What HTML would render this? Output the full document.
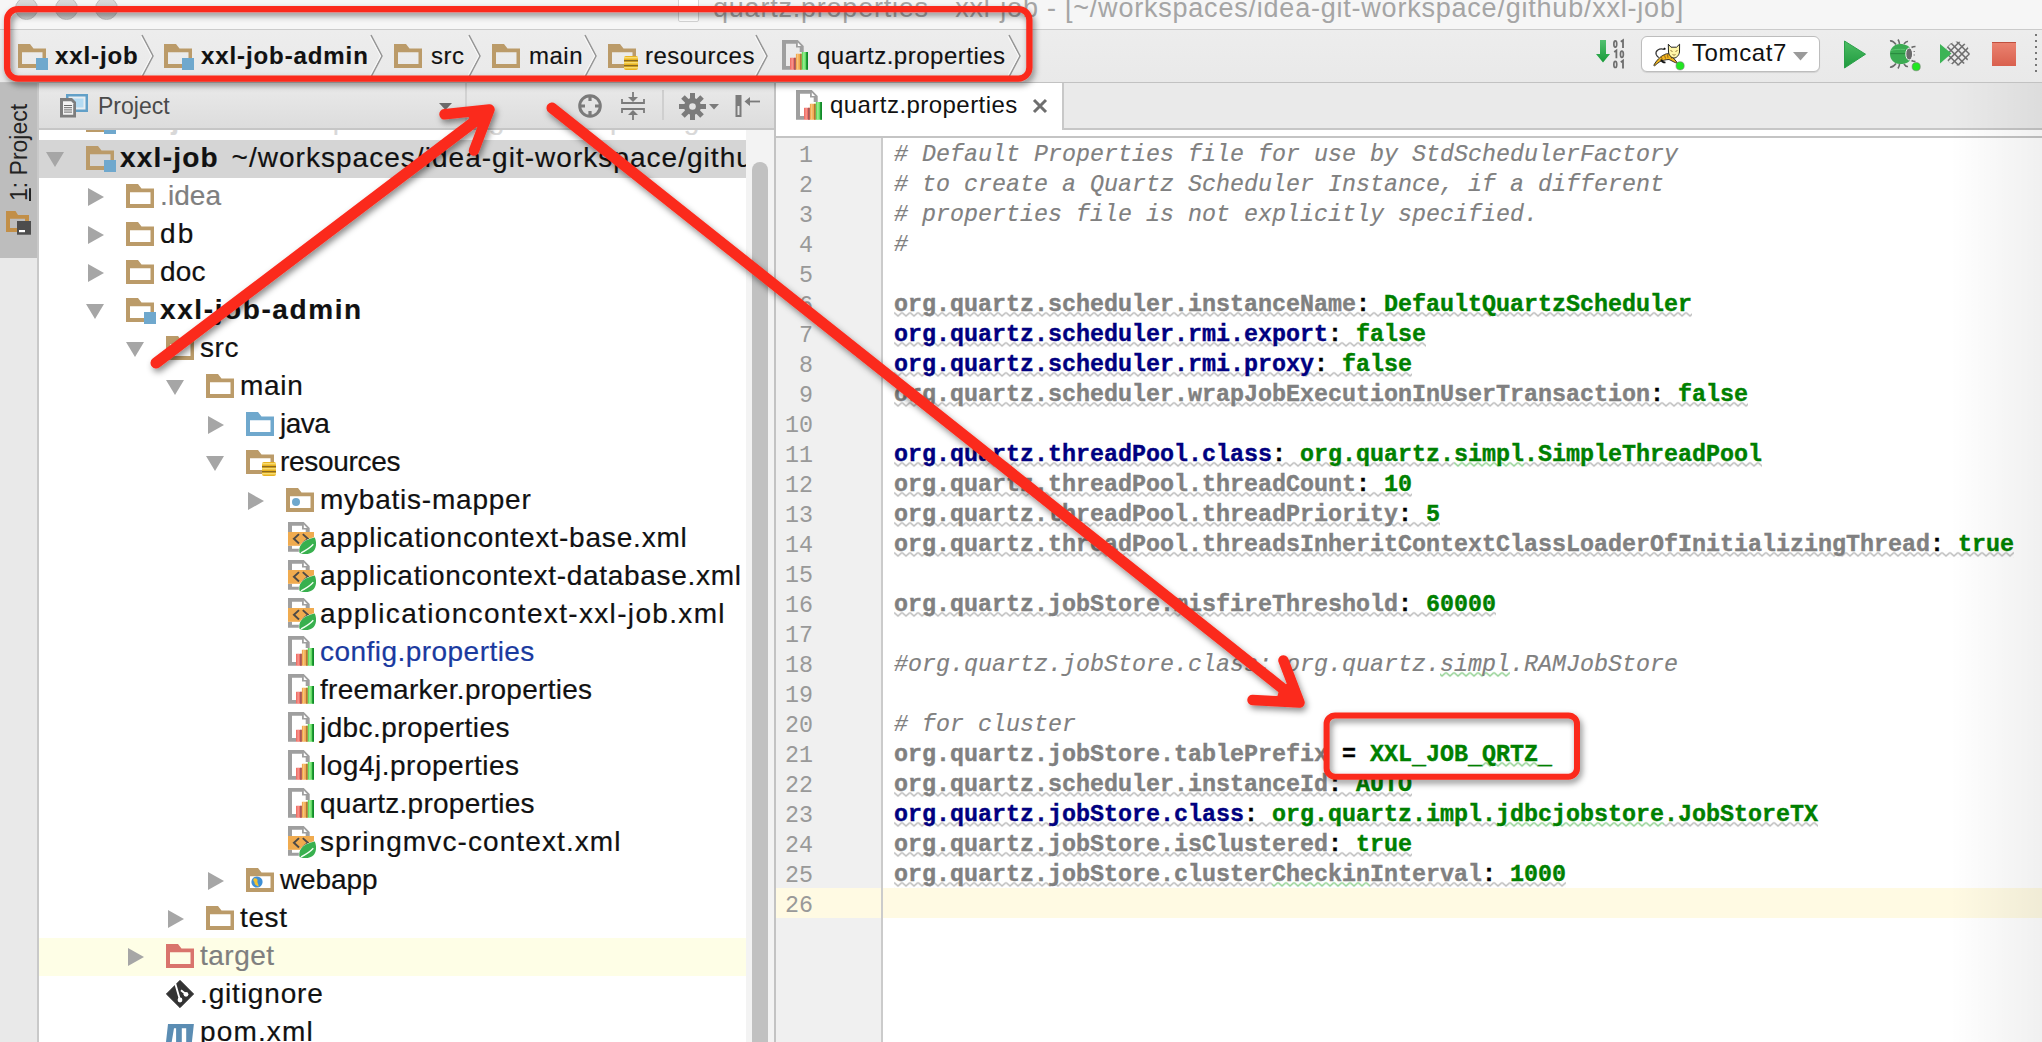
<!DOCTYPE html>
<html><head><meta charset="utf-8">
<style>
*{box-sizing:border-box}
html,body{margin:0;padding:0}
body{width:2042px;height:1042px;overflow:hidden;position:relative;background:#fff;font-family:"Liberation Sans",sans-serif;color:#000}
.a{position:absolute}
.t{position:absolute;white-space:nowrap;line-height:1}
svg.i{position:absolute;overflow:visible}
/* title */
#title{left:0;top:0;width:2042px;height:29px;background:#f6f6f6}
#titlesep{left:0;top:29px;width:2042px;height:1px;background:#cbcbcb}
#nav{left:0;top:30px;width:2042px;height:52px;background:linear-gradient(#ededed,#e9e9e9)}
#navsep{left:0;top:82px;width:2042px;height:1px;background:#c2c2c2}
.bc{font-size:24px;top:44px;color:#111;-webkit-text-stroke:0.15px currentColor}
.bcb{font-weight:bold}
/* left strip */
#strip{left:0;top:83px;width:37px;height:959px;background:#e9e9e9}
#striptab{left:0;top:83px;width:37px;height:175px;background:#bdbdbd}
#stripsep{left:37px;top:83px;width:2px;height:959px;background:#c9c9c9}
/* panel */
#phead{left:39px;top:83px;width:735px;height:46px;background:linear-gradient(#eaeaea,#dcdcdc)}
#pheadsep{left:39px;top:128px;width:735px;height:2px;background:#c6c6c6}
#tree{left:39px;top:130px;width:707px;height:912px;background:#fff;overflow:hidden}
#sbtrack{left:746px;top:130px;width:28px;height:912px;background:#f3f3f3}
#sbthumb{left:752px;top:162px;width:16px;height:900px;background:#c1c1c1;border-radius:8px}
#split{left:774px;top:83px;width:2px;height:959px;background:#c3c3c3}
.tr{position:absolute;left:0;width:707px;height:38px}
.tx{position:absolute;top:0;font-size:28px;line-height:38px;white-space:nowrap;letter-spacing:0.3px;-webkit-text-stroke:0.2px currentColor}
.tri{position:absolute}
/* editor */
#tabbar{left:776px;top:83px;width:1266px;height:45px;background:#eaeaea}
#tabbarsep{left:776px;top:128px;width:1266px;height:2px;background:#c6c6c6}
#tab{left:776px;top:83px;width:286px;height:53px;background:#fff}
#tabr{left:1062px;top:83px;width:2px;height:47px;background:#c8c8c8}
#tabsep2{left:776px;top:136px;width:1266px;height:2px;background:#c4c4c4}
#gutter{left:776px;top:138px;width:106px;height:904px;background:#f0f0f0}
#gutsep{left:881px;top:138px;width:2px;height:904px;background:#cbcbcb}
#curline{left:776px;top:888px;width:1266px;height:30px;background:#fffae3}
.ln{position:absolute;left:776px;width:37px;text-align:right;font-family:"Liberation Mono",monospace;font-size:23.33px;color:#999;line-height:30px;height:30px}
.cl{position:absolute;left:894px;font-family:"Liberation Mono",monospace;font-size:23.33px;line-height:30px;height:30px;white-space:pre;font-weight:bold;-webkit-text-stroke:0.4px currentColor}
.cm{color:#808080;font-style:italic;font-weight:normal;-webkit-text-stroke:0.15px currentColor}
.kg{color:#808080}
.kb{color:#000080}
.co{color:#000}
.vg{color:#008000}
</style></head>
<body>
<svg width="0" height="0" style="position:absolute"><defs>
<symbol id="fold" viewBox="0 0 28 24"><path d="M0 0H12L15.5 4.4H28V24H0Z M4 8.2V20H24.5V8.2Z" fill-rule="evenodd"/></symbol>
<symbol id="props" viewBox="0 0 26 30"><path d="M0 0H15.8L21.7 5.9V12H17.7V7.5H14V3.8H4V26H8V29.7H0Z" fill="#9f9f9f"/><path d="M15.8 2.6L19.1 6H15.8Z" fill="#fff"/>
<rect x="8" y="17.8" width="5.9" height="11.9" fill="#f07068"/><rect x="9.6" y="17.8" width="1" height="11.9" fill="#f8a8a0"/><rect x="12" y="17.8" width="1.9" height="11.9" fill="#a8585a"/>
<rect x="13.9" y="13.8" width="5.9" height="15.9" fill="#f2aa50"/><rect x="15.3" y="13.8" width="1" height="15.9" fill="#f8d090"/><rect x="18" y="13.8" width="1.8" height="15.9" fill="#b07838"/>
<rect x="19.8" y="12" width="6.2" height="17.7" fill="#62dc62"/><rect x="21.3" y="12" width="1.2" height="17.7" fill="#a8f0a0"/><rect x="24.2" y="12" width="1.8" height="17.7" fill="#118a2a"/></symbol>
<symbol id="spring" viewBox="0 0 28 32"><path d="M0 0H15.8L21.7 5.9V10H17.7V7.5H14V3.8H4V10H0Z M0 23.8H4V26.7H12V29.8H0Z" fill="#9f9f9f"/><path d="M15.8 2.6L19.1 6H15.8Z" fill="#fff"/>
<rect x="0" y="10" width="26" height="13.8" fill="#f0ab4f"/>
<path d="M11 12.1L5.9 16.8L11 21.5 M14.8 12.1L19.9 16.8L14.8 21.5" fill="none" stroke="#4d4a48" stroke-width="1.9"/>
<path d="M11.5 30.8C10.3 24 14 18.3 26.8 15.6C28.8 20 28.8 27.5 24.2 30.3C21 32.6 15 32.8 11.5 30.8Z" fill="#38b04e" stroke="#fff" stroke-width="1" paint-order="stroke"/>
<path d="M13 30.8C17 29 22 26 25.3 22.3" fill="none" stroke="#f4fff4" stroke-width="1.3"/></symbol>
</defs></svg>
<div class="a" id="title"></div>
<div class="a" id="titlesep"></div>
<div class="a" id="nav"></div>
<div class="a" id="navsep"></div>
<div class="a" id="strip"></div>
<div class="a" id="striptab"></div>
<div class="a" id="stripsep"></div>
<div class="a" id="phead"></div>
<div class="a" id="pheadsep"></div>
<div class="a" id="tree"></div>
<div class="a" id="sbtrack"></div>
<div class="a" id="sbthumb"></div>
<div class="a" id="split"></div>
<div class="a" id="tabbar"></div>
<div class="a" id="tabbarsep"></div>
<div class="a" id="tab"></div>
<div class="a" id="tabr"></div>
<div class="a" id="tabsep2"></div>
<div class="a" id="gutter"></div>
<div class="a" id="curline"></div>
<div class="a" id="gutsep"></div>
<svg class="i" style="left:0;top:0" width="2042" height="1042"><defs><pattern id="wv" x="894" y="0" width="8" height="6" patternUnits="userSpaceOnUse"><path d="M0 1 L4 4.6 L8 1" fill="none" stroke="#b9b9b9" stroke-width="1.5"/></pattern><pattern id="wvg" x="894" y="0" width="8" height="6" patternUnits="userSpaceOnUse"><path d="M0 1 L4 4.6 L8 1" fill="none" stroke="#8fcf8f" stroke-width="1.5"/></pattern></defs>
<rect x="894" y="0" width="798" height="6" fill="url(#wv)" transform="translate(0 311.5)"/>
<rect x="894" y="0" width="532" height="6" fill="url(#wv)" transform="translate(0 341.5)"/>
<rect x="894" y="0" width="518" height="6" fill="url(#wv)" transform="translate(0 371.5)"/>
<rect x="894" y="0" width="854" height="6" fill="url(#wv)" transform="translate(0 401.5)"/>
<rect x="894" y="0" width="560" height="6" fill="url(#wv)" transform="translate(0 461.5)"/>
<rect x="1524" y="0" width="238" height="6" fill="url(#wv)" transform="translate(0 461.5)"/>
<rect x="1454" y="0" width="70" height="6" fill="url(#wvg)" transform="translate(0 461.5)"/>
<rect x="894" y="0" width="518" height="6" fill="url(#wv)" transform="translate(0 491.5)"/>
<rect x="894" y="0" width="546" height="6" fill="url(#wv)" transform="translate(0 521.5)"/>
<rect x="894" y="0" width="1120" height="6" fill="url(#wv)" transform="translate(0 551.5)"/>
<rect x="894" y="0" width="602" height="6" fill="url(#wv)" transform="translate(0 611.5)"/>
<rect x="1440" y="0" width="70" height="6" fill="url(#wvg)" transform="translate(0 671.5)"/>
<rect x="1482" y="0" width="56" height="6" fill="url(#wvg)" transform="translate(0 761.5)"/>
<rect x="894" y="0" width="518" height="6" fill="url(#wv)" transform="translate(0 791.5)"/>
<rect x="894" y="0" width="602" height="6" fill="url(#wv)" transform="translate(0 821.5)"/>
<rect x="1664" y="0" width="154" height="6" fill="url(#wv)" transform="translate(0 821.5)"/>
<rect x="1496" y="0" width="168" height="6" fill="url(#wvg)" transform="translate(0 821.5)"/>
<rect x="894" y="0" width="518" height="6" fill="url(#wv)" transform="translate(0 851.5)"/>
<rect x="894" y="0" width="378" height="6" fill="url(#wv)" transform="translate(0 881.5)"/>
<rect x="1370" y="0" width="196" height="6" fill="url(#wv)" transform="translate(0 881.5)"/>
<rect x="1272" y="0" width="98" height="6" fill="url(#wvg)" transform="translate(0 881.5)"/>
</svg>
<div class="ln" style="top:141px">1</div>
<div class="cl" style="top:140px"><span class="cm"># Default Properties file for use by StdSchedulerFactory</span></div>
<div class="ln" style="top:171px">2</div>
<div class="cl" style="top:170px"><span class="cm"># to create a Quartz Scheduler Instance, if a different</span></div>
<div class="ln" style="top:201px">3</div>
<div class="cl" style="top:200px"><span class="cm"># properties file is not explicitly specified.</span></div>
<div class="ln" style="top:231px">4</div>
<div class="cl" style="top:230px"><span class="cm">#</span></div>
<div class="ln" style="top:261px">5</div>
<div class="ln" style="top:291px">6</div>
<div class="cl" style="top:290px"><span class="kg">org.quartz.scheduler.instanceName</span><span class="co">: </span><span class="vg">DefaultQuartzScheduler</span></div>
<div class="ln" style="top:321px">7</div>
<div class="cl" style="top:320px"><span class="kb">org.quartz.scheduler.rmi.export</span><span class="co">: </span><span class="vg">false</span></div>
<div class="ln" style="top:351px">8</div>
<div class="cl" style="top:350px"><span class="kb">org.quartz.scheduler.rmi.proxy</span><span class="co">: </span><span class="vg">false</span></div>
<div class="ln" style="top:381px">9</div>
<div class="cl" style="top:380px"><span class="kg">org.quartz.scheduler.wrapJobExecutionInUserTransaction</span><span class="co">: </span><span class="vg">false</span></div>
<div class="ln" style="top:411px">10</div>
<div class="ln" style="top:441px">11</div>
<div class="cl" style="top:440px"><span class="kb">org.quartz.threadPool.class</span><span class="co">: </span><span class="vg">org.quartz.simpl.SimpleThreadPool</span></div>
<div class="ln" style="top:471px">12</div>
<div class="cl" style="top:470px"><span class="kg">org.quartz.threadPool.threadCount</span><span class="co">: </span><span class="vg">10</span></div>
<div class="ln" style="top:501px">13</div>
<div class="cl" style="top:500px"><span class="kg">org.quartz.threadPool.threadPriority</span><span class="co">: </span><span class="vg">5</span></div>
<div class="ln" style="top:531px">14</div>
<div class="cl" style="top:530px"><span class="kg">org.quartz.threadPool.threadsInheritContextClassLoaderOfInitializingThread</span><span class="co">: </span><span class="vg">true</span></div>
<div class="ln" style="top:561px">15</div>
<div class="ln" style="top:591px">16</div>
<div class="cl" style="top:590px"><span class="kg">org.quartz.jobStore.misfireThreshold</span><span class="co">: </span><span class="vg">60000</span></div>
<div class="ln" style="top:621px">17</div>
<div class="ln" style="top:651px">18</div>
<div class="cl" style="top:650px"><span class="cm">#org.quartz.jobStore.class: org.quartz.simpl.RAMJobStore</span></div>
<div class="ln" style="top:681px">19</div>
<div class="ln" style="top:711px">20</div>
<div class="cl" style="top:710px"><span class="cm"># for cluster</span></div>
<div class="ln" style="top:741px">21</div>
<div class="cl" style="top:740px"><span class="kg">org.quartz.jobStore.tablePrefix</span><span class="co"> = </span><span class="vg">XXL<span style="position:relative;top:3px">_</span>JOB<span style="position:relative;top:3px">_</span>QRTZ<span style="position:relative;top:3px">_</span></span></div>
<div class="ln" style="top:771px">22</div>
<div class="cl" style="top:770px"><span class="kg">org.quartz.scheduler.instanceId</span><span class="co">: </span><span class="vg">AUTO</span></div>
<div class="ln" style="top:801px">23</div>
<div class="cl" style="top:800px"><span class="kb">org.quartz.jobStore.class</span><span class="co">: </span><span class="vg">org.quartz.impl.jdbcjobstore.JobStoreTX</span></div>
<div class="ln" style="top:831px">24</div>
<div class="cl" style="top:830px"><span class="kg">org.quartz.jobStore.isClustered</span><span class="co">: </span><span class="vg">true</span></div>
<div class="ln" style="top:861px">25</div>
<div class="cl" style="top:860px"><span class="kg">org.quartz.jobStore.clusterCheckinInterval</span><span class="co">: </span><span class="vg">1000</span></div>
<div class="ln" style="top:891px">26</div>
<div class="a" style="left:39px;top:140px;width:707px;height:38px;background:#d5d5d5"></div>
<div class="a" style="left:39px;top:938px;width:707px;height:38px;background:#fefee6"></div>
<svg class="i" style="left:46px;top:152px" width="18" height="15"><path d="M0 0H18L9 15Z" fill="#a6a6a6"/></svg>
<svg class="i" style="left:86px;top:146px" width="28" height="24"><use href="#fold" fill="#bb9b69"/></svg><div class="a" style="left:104px;top:160px;width:12px;height:12px;background:#6fa8cd"></div>
<div class="tx" style="left:120px;top:139px;width:626px;overflow:hidden;color:#111;font-weight:bold;letter-spacing:1.24px">xxl-job<span style="font-weight:normal;letter-spacing:1.03px;margin-left:-5px">&nbsp;&nbsp;~/workspaces/idea-git-workspace/github</span></div>
<svg class="i" style="left:88px;top:188px" width="16" height="18"><path d="M0 0L16 9L0 18Z" fill="#a6a6a6"/></svg>
<svg class="i" style="left:126px;top:184px" width="28" height="24"><use href="#fold" fill="#bb9b69"/></svg>
<div class="tx" style="left:160px;top:177px;color:#7f7f7f;font-weight:normal;letter-spacing:0.1px">.idea</div>
<svg class="i" style="left:88px;top:226px" width="16" height="18"><path d="M0 0L16 9L0 18Z" fill="#a6a6a6"/></svg>
<svg class="i" style="left:126px;top:222px" width="28" height="24"><use href="#fold" fill="#bb9b69"/></svg>
<div class="tx" style="left:160px;top:215px;color:#111;font-weight:normal;letter-spacing:2.3px">db</div>
<svg class="i" style="left:88px;top:264px" width="16" height="18"><path d="M0 0L16 9L0 18Z" fill="#a6a6a6"/></svg>
<svg class="i" style="left:126px;top:260px" width="28" height="24"><use href="#fold" fill="#bb9b69"/></svg>
<div class="tx" style="left:160px;top:253px;color:#111;font-weight:normal;letter-spacing:0.2px">doc</div>
<svg class="i" style="left:86px;top:304px" width="18" height="15"><path d="M0 0H18L9 15Z" fill="#a6a6a6"/></svg>
<svg class="i" style="left:126px;top:298px" width="28" height="24"><use href="#fold" fill="#bb9b69"/></svg><div class="a" style="left:144px;top:312px;width:12px;height:12px;background:#6fa8cd"></div>
<div class="tx" style="left:160px;top:291px;color:#111;font-weight:bold;letter-spacing:1.6px">xxl-job-admin</div>
<svg class="i" style="left:126px;top:342px" width="18" height="15"><path d="M0 0H18L9 15Z" fill="#a6a6a6"/></svg>
<svg class="i" style="left:166px;top:336px" width="28" height="24"><use href="#fold" fill="#bb9b69"/></svg>
<div class="tx" style="left:200px;top:329px;color:#111;font-weight:normal;letter-spacing:0.6px">src</div>
<svg class="i" style="left:166px;top:380px" width="18" height="15"><path d="M0 0H18L9 15Z" fill="#a6a6a6"/></svg>
<svg class="i" style="left:206px;top:374px" width="28" height="24"><use href="#fold" fill="#bb9b69"/></svg>
<div class="tx" style="left:240px;top:367px;color:#111;font-weight:normal;letter-spacing:0.7px">main</div>
<svg class="i" style="left:208px;top:416px" width="16" height="18"><path d="M0 0L16 9L0 18Z" fill="#a6a6a6"/></svg>
<svg class="i" style="left:246px;top:412px" width="28" height="24"><use href="#fold" fill="#6fa8cd"/></svg>
<div class="tx" style="left:280px;top:405px;color:#111;font-weight:normal;letter-spacing:-0.5px">java</div>
<svg class="i" style="left:206px;top:456px" width="18" height="15"><path d="M0 0H18L9 15Z" fill="#a6a6a6"/></svg>
<svg class="i" style="left:246px;top:450px" width="28" height="24"><use href="#fold" fill="#bb9b69"/></svg><svg class="i" style="left:262px;top:462px" width="14" height="14"><rect x="0" y="0" width="14" height="14" rx="2" fill="#e9b321"/><rect x="0" y="4" width="14" height="1.3" fill="#8a6a20"/><rect x="0" y="9" width="14" height="1.3" fill="#8a6a20"/><rect x="0" y="1" width="14" height="1.5" fill="#f8dc70"/><rect x="0" y="6" width="14" height="1.5" fill="#f8dc70"/><rect x="0" y="11" width="14" height="1.5" fill="#f8dc70"/></svg>
<div class="tx" style="left:280px;top:443px;color:#111;font-weight:normal;letter-spacing:-0.32px">resources</div>
<svg class="i" style="left:248px;top:492px" width="16" height="18"><path d="M0 0L16 9L0 18Z" fill="#a6a6a6"/></svg>
<svg class="i" style="left:286px;top:488px" width="28" height="24"><use href="#fold" fill="#bb9b69"/></svg><div class="a" style="left:292px;top:498px;width:8px;height:8px;border-radius:50%;background:#6fa8cd"></div>
<div class="tx" style="left:320px;top:481px;color:#111;font-weight:normal;letter-spacing:0.77px">mybatis-mapper</div>
<svg class="i" style="left:288px;top:522px" width="28" height="32"><use href="#spring"/></svg>
<div class="tx" style="left:320px;top:519px;color:#111;font-weight:normal;letter-spacing:0.82px">applicationcontext-base.xml</div>
<svg class="i" style="left:288px;top:560px" width="28" height="32"><use href="#spring"/></svg>
<div class="tx" style="left:320px;top:557px;color:#111;font-weight:normal;letter-spacing:0.7px">applicationcontext-database.xml</div>
<svg class="i" style="left:288px;top:598px" width="28" height="32"><use href="#spring"/></svg>
<div class="tx" style="left:320px;top:595px;color:#111;font-weight:normal;letter-spacing:1.34px">applicationcontext-xxl-job.xml</div>
<svg class="i" style="left:288px;top:636px" width="26" height="30"><use href="#props"/></svg>
<div class="tx" style="left:320px;top:633px;color:#1a3a9f;font-weight:normal;letter-spacing:0.46px">config.properties</div>
<svg class="i" style="left:288px;top:674px" width="26" height="30"><use href="#props"/></svg>
<div class="tx" style="left:320px;top:671px;color:#111;font-weight:normal;letter-spacing:0.3px">freemarker.properties</div>
<svg class="i" style="left:288px;top:712px" width="26" height="30"><use href="#props"/></svg>
<div class="tx" style="left:320px;top:709px;color:#111;font-weight:normal;letter-spacing:0.41px">jdbc.properties</div>
<svg class="i" style="left:288px;top:750px" width="26" height="30"><use href="#props"/></svg>
<div class="tx" style="left:320px;top:747px;color:#111;font-weight:normal;letter-spacing:0.51px">log4j.properties</div>
<svg class="i" style="left:288px;top:788px" width="26" height="30"><use href="#props"/></svg>
<div class="tx" style="left:320px;top:785px;color:#111;font-weight:normal;letter-spacing:0.28px">quartz.properties</div>
<svg class="i" style="left:288px;top:826px" width="28" height="32"><use href="#spring"/></svg>
<div class="tx" style="left:320px;top:823px;color:#111;font-weight:normal;letter-spacing:1.1px">springmvc-context.xml</div>
<svg class="i" style="left:208px;top:872px" width="16" height="18"><path d="M0 0L16 9L0 18Z" fill="#a6a6a6"/></svg>
<svg class="i" style="left:246px;top:868px" width="28" height="24"><use href="#fold" fill="#bb9b69"/></svg><svg class="i" style="left:251px;top:876px" width="12" height="12"><circle cx="6" cy="6" r="5.6" fill="#3d8fd6"/><path d="M3 2.5C5 2 7 3 6.5 5C6 7 8 8 7.5 10.5C5 10 3 8 3.5 6C2 5 2 3.5 3 2.5Z" fill="#f2c230"/></svg>
<div class="tx" style="left:280px;top:861px;color:#111;font-weight:normal;letter-spacing:-0.1px">webapp</div>
<svg class="i" style="left:168px;top:910px" width="16" height="18"><path d="M0 0L16 9L0 18Z" fill="#a6a6a6"/></svg>
<svg class="i" style="left:206px;top:906px" width="28" height="24"><use href="#fold" fill="#bb9b69"/></svg>
<div class="tx" style="left:240px;top:899px;color:#111;font-weight:normal;letter-spacing:0.63px">test</div>
<svg class="i" style="left:128px;top:948px" width="16" height="18"><path d="M0 0L16 9L0 18Z" fill="#a6a6a6"/></svg>
<svg class="i" style="left:166px;top:944px" width="28" height="24"><use href="#fold" fill="#d9746c"/></svg>
<div class="tx" style="left:200px;top:937px;color:#7f7f7f;font-weight:normal;letter-spacing:0.5px">target</div>
<svg class="i" style="left:166px;top:980px" width="28" height="28"><path d="M14 0.3L27.7 14L14 27.7L0.3 14Z" fill="#333" stroke="#333" stroke-width="0.8" stroke-linejoin="round"/><path d="M9.3 3.8L14 20 M15 10.2L20 14.3" fill="none" stroke="#fff" stroke-width="1.9"/><circle cx="14" cy="20" r="2.4" fill="#fff"/><circle cx="20" cy="14.3" r="2.4" fill="#fff"/></svg>
<div class="tx" style="left:200px;top:975px;color:#111;font-weight:normal;letter-spacing:0.85px">.gitignore</div>
<svg class="i" style="left:166px;top:1024px" width="28" height="20"><path d="M2 0H27.9L25.9 18H20.2V4.2H15.8V18H10.1V4.2H8L5.7 18H0Z" fill="#5b8db3"/></svg>
<div class="tx" style="left:200px;top:1013px;color:#111;font-weight:normal;letter-spacing:1.14px">pom.xml</div>
<div class="a" style="left:39px;top:130px;width:707px;height:10px;overflow:hidden;background:#fff"><div class="a" style="left:-39px;top:-130px;width:2042px;height:200px"><svg class="i" style="left:46px;top:114px" width="18" height="15"><path d="M0 0H18L9 15Z" fill="#a6a6a6"/></svg>
<svg class="i" style="left:86px;top:108px" width="28" height="24"><use href="#fold" fill="#bb9b69"/></svg><div class="a" style="left:104px;top:122px;width:12px;height:12px;background:#6fa8cd"></div>
<div class="tx" style="left:120px;top:101px;width:626px;overflow:hidden;color:#d8d8d8;font-weight:bold;letter-spacing:0.77px">xxl-job<span style="font-weight:normal;letter-spacing:1.03px;margin-left:-5px">&nbsp;&nbsp;~/workspaces/idea-git-workspace/github</span></div></div></div>
<div class="a" style="left:14.5px;top:-3px;width:23px;height:23px;border-radius:50%;background:linear-gradient(#dadada,#cbcbcb);border:1px solid #bdbdbd"></div>
<div class="a" style="left:54.5px;top:-3px;width:23px;height:23px;border-radius:50%;background:linear-gradient(#dadada,#cbcbcb);border:1px solid #bdbdbd"></div>
<div class="a" style="left:94.5px;top:-3px;width:23px;height:23px;border-radius:50%;background:linear-gradient(#dadada,#cbcbcb);border:1px solid #bdbdbd"></div>
<div class="a" style="left:678px;top:-6px;width:21px;height:28px;background:#fff;border:1px solid #d4d4d4;border-radius:2px"></div>
<div class="t" style="left:713px;top:-5px;font-size:27px;letter-spacing:0.78px;color:#a5a5a5">quartz.properties - xxl-job - [~/workspaces/idea-git-workspace/github/xxl-job]</div>
<svg class="i" style="left:18px;top:44px" width="28" height="24"><use href="#fold" fill="#bb9b69"/></svg><div class="a" style="left:36px;top:58px;width:12px;height:12px;background:#6fa8cd"></div>
<div class="t bc bcb" style="left:55px;letter-spacing:0.9px">xxl-job</div>
<svg class="i" style="left:141px;top:34px" width="14" height="44"><path d="M1 1L12 22L1 43" fill="none" stroke="#959595" stroke-width="1.5"/><path d="M0 2.5L10.5 22L0 41.5" fill="none" stroke="#fafafa" stroke-width="1"/></svg>
<svg class="i" style="left:164px;top:44px" width="28" height="24"><use href="#fold" fill="#bb9b69"/></svg><div class="a" style="left:182px;top:58px;width:12px;height:12px;background:#6fa8cd"></div>
<div class="t bc bcb" style="left:201px;letter-spacing:0.9px">xxl-job-admin</div>
<svg class="i" style="left:370px;top:34px" width="14" height="44"><path d="M1 1L12 22L1 43" fill="none" stroke="#959595" stroke-width="1.5"/><path d="M0 2.5L10.5 22L0 41.5" fill="none" stroke="#fafafa" stroke-width="1"/></svg>
<svg class="i" style="left:394px;top:44px" width="28" height="24"><use href="#fold" fill="#bb9b69"/></svg>
<div class="t bc" style="left:431px;letter-spacing:0.5px">src</div>
<svg class="i" style="left:468px;top:34px" width="14" height="44"><path d="M1 1L12 22L1 43" fill="none" stroke="#959595" stroke-width="1.5"/><path d="M0 2.5L10.5 22L0 41.5" fill="none" stroke="#fafafa" stroke-width="1"/></svg>
<svg class="i" style="left:492px;top:44px" width="28" height="24"><use href="#fold" fill="#bb9b69"/></svg>
<div class="t bc" style="left:529px;letter-spacing:0.5px">main</div>
<svg class="i" style="left:584px;top:34px" width="14" height="44"><path d="M1 1L12 22L1 43" fill="none" stroke="#959595" stroke-width="1.5"/><path d="M0 2.5L10.5 22L0 41.5" fill="none" stroke="#fafafa" stroke-width="1"/></svg>
<svg class="i" style="left:608px;top:44px" width="28" height="24"><use href="#fold" fill="#bb9b69"/></svg><svg class="i" style="left:624px;top:56px" width="14" height="14"><rect x="0" y="0" width="14" height="14" rx="2" fill="#e9b321"/><rect x="0" y="4" width="14" height="1.3" fill="#8a6a20"/><rect x="0" y="9" width="14" height="1.3" fill="#8a6a20"/><rect x="0" y="1" width="14" height="1.5" fill="#f8dc70"/><rect x="0" y="6" width="14" height="1.5" fill="#f8dc70"/><rect x="0" y="11" width="14" height="1.5" fill="#f8dc70"/></svg>
<div class="t bc" style="left:645px;letter-spacing:0.5px">resources</div>
<svg class="i" style="left:755px;top:34px" width="14" height="44"><path d="M1 1L12 22L1 43" fill="none" stroke="#959595" stroke-width="1.5"/><path d="M0 2.5L10.5 22L0 41.5" fill="none" stroke="#fafafa" stroke-width="1"/></svg>
<svg class="i" style="left:782px;top:40px" width="26" height="30"><use href="#props"/></svg>
<div class="t bc" style="left:817px;letter-spacing:0.5px">quartz.properties</div>
<svg class="i" style="left:1008px;top:34px" width="14" height="44"><path d="M1 1L12 22L1 43" fill="none" stroke="#959595" stroke-width="1.5"/><path d="M0 2.5L10.5 22L0 41.5" fill="none" stroke="#fafafa" stroke-width="1"/></svg>
<svg class="i" style="left:1595px;top:39px" width="16" height="24"><defs><linearGradient id="ga" x1="0" y1="0" x2="0" y2="1"><stop offset="0" stop-color="#52c070"/><stop offset="1" stop-color="#189a38"/></linearGradient></defs><path d="M5 1H11V15H15L8 23.5L1 15H5Z" fill="url(#ga)"/></svg>
<svg class="i" style="left:1612.5px;top:40px" width="14" height="30"><ellipse cx="2.3" cy="4.0" rx="1.45" ry="3.1" fill="none" stroke="#6e6e6e" stroke-width="1.7"/><path d="M7.8 1.8L10.0 0.2V8.0" fill="none" stroke="#6e6e6e" stroke-width="1.8"/><path d="M1.2 12.0L3.4 10.399999999999999V18.2" fill="none" stroke="#6e6e6e" stroke-width="1.8"/><ellipse cx="8.899999999999999" cy="14.2" rx="1.45" ry="3.1" fill="none" stroke="#6e6e6e" stroke-width="1.7"/><ellipse cx="2.3" cy="24.4" rx="1.45" ry="3.1" fill="none" stroke="#6e6e6e" stroke-width="1.7"/><path d="M7.8 22.2L10.0 20.599999999999998V28.4" fill="none" stroke="#6e6e6e" stroke-width="1.8"/></svg>
<div class="a" style="left:1641px;top:36px;width:179px;height:36px;background:#fff;border:1px solid #bdbdbd;border-radius:6px;box-shadow:0 1px 1px rgba(0,0,0,0.10)"></div>
<svg class="i" style="left:1652px;top:42px" width="34" height="30"><path d="M12.5 7.5C7 5.5 3 9 4.2 12.5C5 14.5 6 15 6.8 15.5" fill="none" stroke="#333" stroke-width="1.2"/><path d="M11.8 6.2L13.4 7.4" stroke="#111" stroke-width="1.6"/><path d="M1.8 23.2C4 19 8 14.5 12.5 12.5C15 11.3 17 11.4 18.5 12.5C21 15.5 23.5 18.5 26 21.5C22 20.5 19.5 18.5 17 17.5C14 17.5 11.5 18.5 9.5 18.8C7 20 4.5 22 2.5 24Z" fill="#f0b51e" stroke="#222" stroke-width="0.9"/><path d="M9 14.8L10.5 17.5M12.5 13.2L13.5 16.5M15.5 12.3L16 15.8M19 14L19.5 16.5" stroke="#8a5a10" stroke-width="0.9"/><path d="M9 17.5C9.5 19.5 11.5 20.5 13.5 20.5" fill="none" stroke="#111" stroke-width="1.6"/><path d="M16.3 2.2L19 5.2H24.5L27.6 2.2L27.5 10C27 13.5 24.5 16 22 16C19.5 16 17 13.5 16.5 10Z" fill="#fff6a8" stroke="#111" stroke-width="0.9"/><path d="M18.5 8.5L20.5 9.5M25.5 8.5L23.5 9.5M20.5 12L22 13.5L23.5 12" fill="none" stroke="#8a6a30" stroke-width="0.9"/><circle cx="28.1" cy="23.8" r="4.1" fill="#22e622" stroke="#7a7a7a" stroke-width="0.6"/></svg>
<div class="t" style="left:1692px;top:41px;font-size:24px;color:#111;letter-spacing:0.6px">Tomcat7</div>
<svg class="i" style="left:1793px;top:52px" width="15" height="9"><path d="M0 0H15L7.5 8.5Z" fill="#9a9a9a"/></svg>
<svg class="i" style="left:1843.5px;top:39.5px" width="23" height="29"><defs><linearGradient id="gr" x1="0" y1="0" x2="0" y2="1"><stop offset="0" stop-color="#4cbd64"/><stop offset="1" stop-color="#1f9a3e"/></linearGradient></defs><path d="M0.5 1L21.5 14.2L0.5 28Z" fill="url(#gr)" stroke="#2aa048" stroke-width="1" stroke-linejoin="round"/></svg>
<svg class="i" style="left:1889px;top:38px" width="34" height="34"><g fill="none" stroke="#6a6a6a" stroke-width="1.6"><path d="M1 3C3 2.5 5 4 7 6.5 M9 1.5C10 3 10.5 4.5 10.5 6 M19 3.5C17 3 16 4.5 15 6"/><path d="M1 29C3 29.5 5 28 7 25.5 M9 30.5C10 29 10.5 27.5 10.5 26 M19 28.5C17 29 16 27.5 15 26"/><path d="M22.5 9.5C24 8.5 25 8.5 26.5 8.5 M22.5 22.5C24 23.5 25 23.5 26.5 23.5"/></g><path d="M11 6C17 6 20.5 8.5 21.5 10.5C19 12 18.5 20 21.5 21.5C20.5 24 17 26 11 26C5 26 1 21.5 1 16C1 10.5 5 6 11 6Z" fill="#3bab52"/><path d="M1.5 15.6H17" stroke="#2a8a40" stroke-width="1.1"/><path d="M2 12.5C5 11.5 10 11 16 11.5" stroke="#5cc470" stroke-width="1" fill="none"/><ellipse cx="20.2" cy="16" rx="3.4" ry="6" fill="#6b6b6b" stroke="#fff" stroke-width="0.9"/><path d="M24.5 13.5H26 M24.5 17H26" stroke="#777" stroke-width="0.9"/><circle cx="27.2" cy="28.7" r="4.1" fill="#22e622" stroke="#7a7a7a" stroke-width="0.6"/></svg>
<svg class="i" style="left:1939px;top:39px" width="31" height="30"><defs><clipPath id="cc"><circle cx="18.5" cy="14.5" r="12"/></clipPath></defs><g clip-path="url(#cc)" stroke="#6f6f6f" stroke-width="1.5" fill="none"><path d="M-14 0L16 30"/><path d="M16 0L-14 30"/><path d="M-6.7 0L23.3 30"/><path d="M23.3 0L-6.7 30"/><path d="M0.6 0L30.6 30"/><path d="M30.6 0L0.6 30"/><path d="M7.9 0L37.9 30"/><path d="M37.9 0L7.9 30"/><path d="M15.2 0L45.2 30"/><path d="M45.2 0L15.2 30"/><path d="M22.5 0L52.5 30"/><path d="M52.5 0L22.5 30"/></g><path d="M1 5L12.5 14.5L1 24.5Z" fill="#3cb456"/></svg>
<div class="a" style="left:1992px;top:42px;width:24px;height:24px;background:linear-gradient(#ea826f,#d9604e);border-top:1px solid #c0503f"></div>
<div class="a" style="left:2035px;top:34px;width:2px;height:2px;background:#777"></div>
<div class="a" style="left:2035px;top:40px;width:2px;height:2px;background:#777"></div>
<div class="a" style="left:2035px;top:46px;width:2px;height:2px;background:#777"></div>
<div class="a" style="left:2035px;top:52px;width:2px;height:2px;background:#777"></div>
<div class="a" style="left:2035px;top:58px;width:2px;height:2px;background:#777"></div>
<div class="a" style="left:2035px;top:64px;width:2px;height:2px;background:#777"></div>
<div class="a" style="left:2035px;top:70px;width:2px;height:2px;background:#777"></div>
<div class="t" style="left:8px;top:201px;font-size:23px;color:#222;transform:rotate(-90deg);transform-origin:0 0"><span style="text-decoration:underline">1</span>: Project</div>
<svg class="i" style="left:6px;top:211px" width="25" height="24"><path d="M0 0H9.5L12 4H23V21H0Z M4 7.7V17H19V7.7Z" fill="#c28f48" fill-rule="evenodd"/><rect x="11" y="10" width="14" height="13.7" fill="#4d4d4d"/><rect x="13" y="19" width="6" height="2.2" fill="#fff"/></svg>
<svg class="i" style="left:59px;top:93px" width="30" height="26"><rect x="7" y="1" width="22" height="18" fill="#62a0c8"/><rect x="9.5" y="3.5" width="17" height="13" fill="#e8eef2"/><rect x="11.5" y="5.5" width="13" height="9" fill="#b5dbf2"/><path d="M1 5H13L17 9V24.6H1Z" fill="#7d7d7d"/><path d="M4 8.2H12.2L14.2 10.2V21.8H4Z" fill="#f2f2f2"/><path d="M5 12.5H13M5 14.7H13M5 16.9H13M5 19.1H13" stroke="#6a6a6a" stroke-width="1"/></svg>
<div class="t" style="left:98px;top:95px;font-size:23px;color:#4a4a4a">Project</div>
<svg class="i" style="left:439px;top:103px" width="13" height="7"><path d="M0 0H13L6.5 7Z" fill="#6a6a6a"/></svg>
<div class="a" style="left:465px;top:83px;width:2px;height:45px;background:#d2d2d2"></div>
<div class="a" style="left:662px;top:90px;width:2px;height:30px;background:#cfcfcf"></div>
<svg class="i" style="left:577px;top:93px" width="26" height="26"><circle cx="13" cy="13" r="10.3" fill="none" stroke="#7b7b7b" stroke-width="3"/><path d="M13 2V8 M13 18V24 M2 13H8 M18 13H24" stroke="#7b7b7b" stroke-width="3.2"/></svg>
<svg class="i" style="left:621px;top:92px" width="24" height="28"><path d="M1 7V11H23V7 M1 21V17H23V21" fill="none" stroke="#7b7b7b" stroke-width="1.8"/><path d="M12 0V6" stroke="#7b7b7b" stroke-width="1.8"/><path d="M7 5H17L12 10Z" fill="#7b7b7b"/><path d="M12 22V28" stroke="#7b7b7b" stroke-width="1.8"/><path d="M7 23H17L12 18Z" fill="#7b7b7b"/></svg>
<svg class="i" style="left:679.5px;top:93.5px" width="25" height="25"><rect x="10" y="-1" width="5" height="27" fill="#7b7b7b" transform="rotate(0 12.5 12.5)"/><rect x="10" y="-1" width="5" height="27" fill="#7b7b7b" transform="rotate(45 12.5 12.5)"/><rect x="10" y="-1" width="5" height="27" fill="#7b7b7b" transform="rotate(90 12.5 12.5)"/><rect x="10" y="-1" width="5" height="27" fill="#7b7b7b" transform="rotate(135 12.5 12.5)"/><circle cx="12.5" cy="12.5" r="8.5" fill="#7b7b7b"/><circle cx="12.5" cy="12.5" r="3.3" fill="#e3e3e3"/></svg>
<svg class="i" style="left:708.5px;top:104px" width="10" height="6"><path d="M0 0H10L5 5.5Z" fill="#7b7b7b"/></svg>
<svg class="i" style="left:735px;top:95px" width="26" height="22"><path d="M0.5 0H6.5V22H0.5Z M2.5 11V20H4.5V11Z" fill="#7b7b7b" fill-rule="evenodd"/><path d="M13 6.5H25" stroke="#7b7b7b" stroke-width="1.8"/><path d="M9.5 6.5L15 2V11Z" fill="#7b7b7b"/></svg>
<svg class="i" style="left:796px;top:90px" width="26" height="30"><use href="#props"/></svg>
<div class="t" style="left:830px;top:93px;font-size:24px;color:#111;letter-spacing:0.45px">quartz.properties</div>
<svg class="i" style="left:1033px;top:99px" width="14" height="14"><path d="M1 1L13 13M13 1L1 13" stroke="#6e6e6e" stroke-width="3"/></svg>
<div class="a" style="left:1950px;top:83px;width:92px;height:959px;background:linear-gradient(to right,rgba(0,0,0,0),rgba(0,0,0,0.06))"></div>
<svg class="i" style="left:0;top:0" width="2042" height="1042">
<defs><filter id="sh" x="-10%" y="-10%" width="120%" height="120%"><feDropShadow dx="2" dy="3.5" stdDeviation="3.2" flood-color="#000" flood-opacity="0.45"/></filter></defs>
<g filter="url(#sh)">
<rect x="7.1" y="9.1" width="1022.3" height="69.5" rx="11" ry="11" fill="none" stroke="#fb2a1c" stroke-width="6.3"/>
<rect x="1326.6" y="715.4" width="250.4" height="61.3" rx="8.5" ry="8.5" fill="none" stroke="#fb2a1c" stroke-width="6"/>
<line x1="156" y1="363" x2="474" y2="122" stroke="#fb2a1c" stroke-width="11" stroke-linecap="round"/>
<path d="M444.5 114.3L489.5 109.5L474 150.5" fill="none" stroke="#fb2a1c" stroke-width="10.5" stroke-linecap="round" stroke-linejoin="round"/>
<polygon points="467,111.7 489.5,109.5 481.5,130 470,121" fill="#fb2a1c"/>
<line x1="552" y1="108" x2="1282" y2="688" stroke="#fb2a1c" stroke-width="11" stroke-linecap="round"/>
<path d="M1283.5 660.5L1299.5 702.5L1252.5 700" fill="none" stroke="#fb2a1c" stroke-width="10.5" stroke-linecap="round" stroke-linejoin="round"/>
<polygon points="1291.5,681.5 1299.5,702.5 1276,701 1280,687" fill="#fb2a1c"/>
</g></svg>
</body></html>
